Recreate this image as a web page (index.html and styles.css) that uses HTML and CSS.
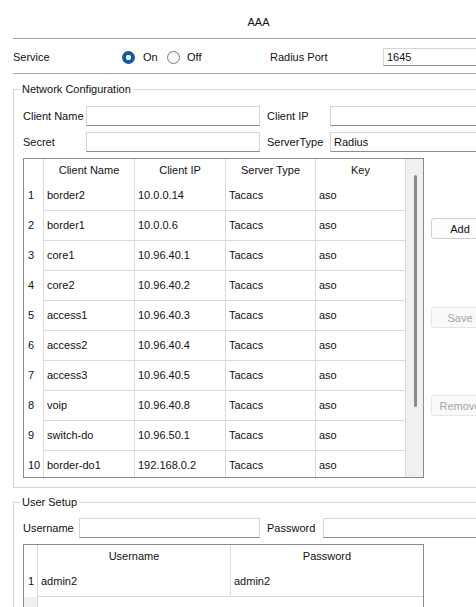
FILE: index.html
```html
<!DOCTYPE html>
<html>
<head>
<meta charset="utf-8">
<title>AAA</title>
<link rel="stylesheet" href="styles.css">
</head>
<body>
<div class="window">
  <div class="title">AAA</div>
  <div class="service">
    <span class="service-label">Service</span>
    <span class="radio radio-on"><span class="radio-dot checked"></span>On</span>
    <span class="radio radio-off"><span class="radio-dot"></span>Off</span>
    <span class="port-label">Radius Port</span>
    <div class="field port-field">1645</div>
  </div>

  <div class="group group-net">
    <span class="legend">Network Configuration</span>
    <div class="form form-net">
      <span class="flabel">Client Name</span><div class="field"></div>
      <span class="flabel flabel-2">Client IP</span><div class="field"></div>
      <span class="flabel">Secret</span><div class="field"></div>
      <span class="flabel flabel-2">ServerType</span><div class="field">Radius</div>
    </div>
    <div class="table-area">
      <div class="ctable">
        <div class="cgrid">
          <div class="crow crow-head"><span class="cell num"></span><span class="cell">Client Name</span><span class="cell">Client IP</span><span class="cell">Server Type</span><span class="cell">Key</span></div>
          <div class="crow crow-body"><span class="cell num">1</span><span class="cell">border2</span><span class="cell">10.0.0.14</span><span class="cell">Tacacs</span><span class="cell">aso</span></div>
          <div class="crow crow-body"><span class="cell num">2</span><span class="cell">border1</span><span class="cell">10.0.0.6</span><span class="cell">Tacacs</span><span class="cell">aso</span></div>
          <div class="crow crow-body"><span class="cell num">3</span><span class="cell">core1</span><span class="cell">10.96.40.1</span><span class="cell">Tacacs</span><span class="cell">aso</span></div>
          <div class="crow crow-body"><span class="cell num">4</span><span class="cell">core2</span><span class="cell">10.96.40.2</span><span class="cell">Tacacs</span><span class="cell">aso</span></div>
          <div class="crow crow-body"><span class="cell num">5</span><span class="cell">access1</span><span class="cell">10.96.40.3</span><span class="cell">Tacacs</span><span class="cell">aso</span></div>
          <div class="crow crow-body"><span class="cell num">6</span><span class="cell">access2</span><span class="cell">10.96.40.4</span><span class="cell">Tacacs</span><span class="cell">aso</span></div>
          <div class="crow crow-body"><span class="cell num">7</span><span class="cell">access3</span><span class="cell">10.96.40.5</span><span class="cell">Tacacs</span><span class="cell">aso</span></div>
          <div class="crow crow-body"><span class="cell num">8</span><span class="cell">voip</span><span class="cell">10.96.40.8</span><span class="cell">Tacacs</span><span class="cell">aso</span></div>
          <div class="crow crow-body"><span class="cell num">9</span><span class="cell">switch-do</span><span class="cell">10.96.50.1</span><span class="cell">Tacacs</span><span class="cell">aso</span></div>
          <div class="crow crow-body"><span class="cell num">10</span><span class="cell">border-do1</span><span class="cell">192.168.0.2</span><span class="cell">Tacacs</span><span class="cell">aso</span></div>
        </div>
        <div class="vscroll"><div class="thumb"></div></div>
      </div>
      <div class="side-buttons">
        <button class="btn">Add</button>
        <button class="btn btn-disabled btn-save">Save</button>
        <button class="btn btn-disabled btn-remove">Remove</button>
      </div>
    </div>
  </div>

  <div class="group group-user">
    <span class="legend">User Setup</span>
    <div class="form form-user">
      <span class="flabel">Username</span><div class="field"></div>
      <span class="flabel flabel-2">Password</span><div class="field"></div>
    </div>
    <div class="utable">
      <div class="urow urow-head"><span class="cell num"></span><span class="cell">Username</span><span class="cell last">Password</span></div>
      <div class="urow urow-body"><span class="cell num">1</span><span class="cell">admin2</span><span class="cell last">admin2</span></div>
      <div class="urow urow-fill"><span class="cell num"></span><span class="cell blank"></span><span class="cell blank last"></span></div>
    </div>
  </div>
</div>
</body>
</html>
```

FILE: styles.css
```css
html, body {
  margin: 0;
  background: #fff;
}
body {
  width: 476px;
  height: 607px;
  overflow: hidden;
  font-family: "Liberation Sans", Arial, sans-serif;
  font-size: 11px;
  color: #111;
}
.window {
  width: 517px;
}
.title {
  margin: 0 13px;
  height: 39px;
  box-sizing: border-box;
  padding-top: 15px;
  line-height: 14px;
  text-align: center;
  border-bottom: 1px solid #a0a0a0;
}
.service {
  margin: 0 13px;
  height: 35px;
  box-sizing: border-box;
  padding-top: 2px;
  border-bottom: 1px solid #a8a8a8;
  display: flex;
  align-items: center;
}
.service-label { width: 109px; flex: none; }
.radio { display: flex; align-items: center; flex: none; }
.radio-on { width: 45px; }
.radio-off { width: 103px; }
.radio-dot {
  width: 13px;
  height: 13px;
  box-sizing: border-box;
  border-radius: 50%;
  border: 1px solid #7b7b7b;
  background: #f7f7f7;
  margin-right: 8px;
  flex: none;
}
.radio-off .radio-dot { margin-right: 7px; }
.radio-dot.checked {
  border: none;
  background: radial-gradient(circle, #fff 2.4px, #0b5cad 3px);
}
.port-label { width: 113px; flex: none; }
.field {
  height: 20px;
  box-sizing: border-box;
  border: 1px solid #d6d6d6;
  border-bottom-color: #8c8c8c;
  background: #fff;
  padding-left: 3px;
  line-height: 18px;
  white-space: nowrap;
}
.port-field {
  flex: 1;
  height: 18px;
  line-height: 16px;
}
.group {
  position: relative;
  margin: 15px 13px 0;
  border: 1px solid #d6d6d6;
  padding: 16px 9px 9px;
}
.legend {
  position: absolute;
  top: -8px;
  left: 6px;
  padding: 0 2px;
  background: #fff;
  line-height: 14px;
}
.group-user {
  margin-top: 14px;
  padding-top: 15px;
}
.form {
  display: grid;
  row-gap: 6px;
  align-items: center;
  grid-auto-rows: 20px;
}
.form-net { grid-template-columns: 63px 174px 70px 174px; }
.form-user { grid-template-columns: 56px 181px 63px 174px; }
.flabel { white-space: nowrap; }
.flabel-2 { padding-left: 7px; }

.table-area {
  display: flex;
  gap: 7px;
  margin-top: 6px;
}
.ctable {
  display: flex;
  flex: none;
  width: 401px;
  height: 320px;
  box-sizing: border-box;
  border: 1px solid #8a8a8a;
  overflow: hidden;
}
.cgrid { width: 382px; flex: none; }
.crow {
  display: grid;
  grid-template-columns: 20px 91px 91px 90px 90px;
  height: 30px;
}
.crow-head { height: 22px; }
.cell {
  box-sizing: border-box;
  border-right: 1px solid #dadada;
  padding-left: 3px;
  line-height: 29px;
  white-space: nowrap;
  overflow: hidden;
}
.crow-head .cell, .urow-head .cell {
  line-height: 22px;
  text-align: center;
  padding: 0;
}
.crow-body .cell, .urow-body .cell { border-bottom: 1px solid #dadada; }
.crow-body .cell.num, .urow-body .cell.num {
  border-bottom: none;
  padding-left: 4px;
}
.vscroll {
  width: 17px;
  flex: none;
  box-sizing: border-box;
  background: #f0f0f0;
  padding-top: 16px;
}
.thumb {
  width: 3px;
  height: 232px;
  margin-left: 8px;
  background: #8a8a8a;
  border-radius: 2px;
}
.side-buttons {
  display: flex;
  flex-direction: column;
  width: 58px;
  flex: none;
  padding-top: 60px;
}
.btn {
  height: 21px;
  box-sizing: border-box;
  border: 1px solid #cfcfcf;
  border-radius: 3px;
  background: #fdfdfd;
  font: inherit;
  color: #111;
  padding: 0;
  text-align: center;
}
.btn-disabled {
  border-color: #e6e6e6;
  background: #fafafa;
  color: #a3a3a3;
}
.btn-save { margin-top: 68px; }
.btn-remove { margin-top: 67px; }

.utable {
  width: 401px;
  box-sizing: border-box;
  border: 1px solid #8a8a8a;
  margin-top: 6px;
}
.urow {
  display: grid;
  grid-template-columns: 14px 193px 192px;
  height: 30px;
}
.urow-head { height: 22px; }
.urow-fill { height: 40px; }
.urow-fill .num { background: #f0f0f0; }
.cell.last { border-right: none; }
.cell.blank { border-right: none; }
```
